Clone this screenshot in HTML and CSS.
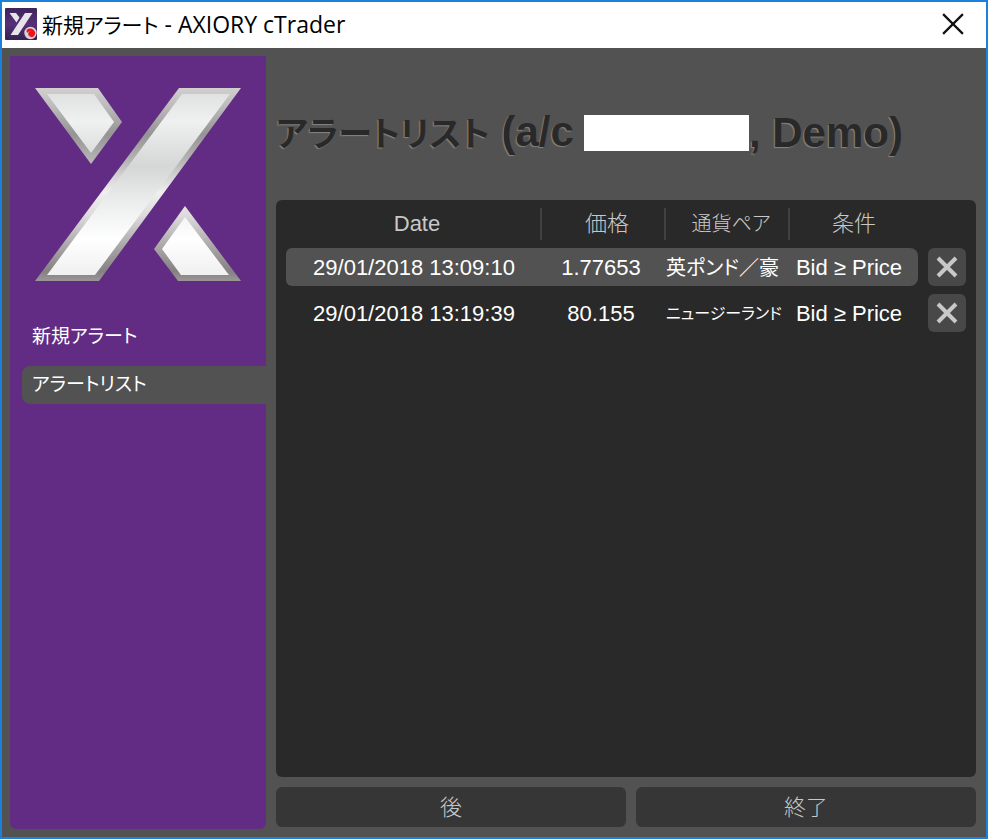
FILE: index.html
```html
<!DOCTYPE html>
<html lang="ja">
<head>
<meta charset="utf-8">
<meta name="viewport" content="width=device-width, initial-scale=1">
<title>新規アラート - AXIORY cTrader</title>
<link rel="stylesheet" href="styles.css">
</head>
<body>
<div class="window">
  <header class="titlebar">
    <svg class="app-icon" viewBox="0 0 32 32" aria-hidden="true">
      <defs>
        <linearGradient id="tile" x1="0" y1="0" x2="0" y2="1">
          <stop offset="0" stop-color="#3d2358"/>
          <stop offset=".5" stop-color="#54307a"/>
          <stop offset="1" stop-color="#38204f"/>
        </linearGradient>
      </defs>
      <rect width="32" height="32" rx="1" fill="url(#tile)"/>
      <path d="M4.500 5h6.500l3.500 4.500-3 5zM20 5h7.500L13 27H5.500z" fill="#e6e4e8"/>
      <circle cx="25.500" cy="25" r="6.200" fill="#d9d4dc"/>
      <path d="M22 21.500c3-2.500 8-.5 8.200 3.500 0 3.500-4 5.500-6.200 3.600 3 .2 4-2.600 2.600-4.200-1.300-1.500-3.600-.8-4.100.6-1-1-1.300-2.500-.5-3.500z" fill="#f01515"/>
      <circle cx="25.700" cy="25.700" r="2.500" fill="#f01515"/>
    </svg>
    <span class="window-title"><span class="jp">新規アラート</span> - AXIORY cTrader</span>
    <button class="window-close" type="button" aria-label="閉じる">
      <svg viewBox="0 0 20 20" aria-hidden="true"><path d="M1 1l18 18M19 1L1 19" fill="none" stroke="#111" stroke-width="2"/></svg>
    </button>
  </header>
  <div class="content">
    <aside class="sidebar">
      <svg class="logo" viewBox="0 0 256 256" aria-hidden="true">
        <defs>
          <linearGradient id="edge" gradientUnits="userSpaceOnUse" x1="0" y1="32" x2="0" y2="225">
            <stop offset="0" stop-color="#d2cfd0"/>
            <stop offset=".1" stop-color="#bcb9ba"/>
            <stop offset=".24" stop-color="#969395"/>
            <stop offset=".38" stop-color="#b8b5b6"/>
            <stop offset=".54" stop-color="#f0efef"/>
            <stop offset=".66" stop-color="#dddbdc"/>
            <stop offset=".82" stop-color="#aaa7a8"/>
            <stop offset=".95" stop-color="#858183"/>
            <stop offset="1" stop-color="#9b9798"/>
          </linearGradient>
          <linearGradient id="face" gradientUnits="userSpaceOnUse" x1="0" y1="38" x2="0" y2="219">
            <stop offset="0" stop-color="#e0e2e1"/>
            <stop offset=".15" stop-color="#eff0f0"/>
            <stop offset=".4" stop-color="#d5d7d6"/>
            <stop offset=".6" stop-color="#eceded"/>
            <stop offset=".8" stop-color="#ffffff"/>
            <stop offset="1" stop-color="#f0f0f0"/>
          </linearGradient>
        </defs>
        <path fill="url(#edge)" d="M25 32H88L112 66 81 108zM169 32H231L89 225H25zM175 150L231 225H168L144 193z"/>
        <path fill="url(#face)" d="M37 38H84L104 66 81 97zM172 38H220L85 219H37zM175 161L219 219H171L152 193z"/>
      </svg>
      <nav class="menu">
        <a class="menu-item" href="#new">新規アラート</a>
        <a class="menu-item active" href="#list" aria-current="page">アラートリスト</a>
      </nav>
    </aside>
    <main class="main">
      <h1 class="heading"><span><span class="jp">アラートリスト</span> (a/c</span><span class="account"></span><span>, Demo)</span></h1>
      <section class="panel">
        <table class="alerts">
          <colgroup>
            <col>
            <col class="col-price">
            <col class="col-pair">
            <col class="col-condition">
            <col class="col-action">
          </colgroup>
          <thead>
            <tr><th scope="col">Date</th><th scope="col">価格</th><th scope="col" class="pair-head">通貨ペア</th><th scope="col">条件</th><td></td></tr>
          </thead>
          <tbody>
            <tr class="selected">
              <td>29/01/2018 13:09:10</td><td class="price">1.77653</td><td class="pair">英ポンド／豪</td><td class="condition">Bid ≥ Price</td>
              <td class="action"><button class="remove" type="button" aria-label="削除"><svg viewBox="0 0 22 22" aria-hidden="true"><path d="M2 2l18 18M20 2L2 20"/></svg></button></td>
            </tr>
            <tr>
              <td>29/01/2018 13:19:39</td><td class="price">80.155</td><td class="pair long">ニュージーランド</td><td class="condition">Bid ≥ Price</td>
              <td class="action"><button class="remove" type="button" aria-label="削除"><svg viewBox="0 0 22 22" aria-hidden="true"><path d="M2 2l18 18M20 2L2 20"/></svg></button></td>
            </tr>
          </tbody>
        </table>
      </section>
      <footer class="actions">
        <button class="btn btn-back" type="button">後</button>
        <button class="btn btn-exit" type="button">終了</button>
      </footer>
    </main>
  </div>
</div>
</body>
</html>
```
FILE: styles.css
```css
* { box-sizing: border-box; }

body {
  margin: 0;
  font-family: "Liberation Sans", "Noto Sans CJK JP", sans-serif;
  font-size: 22px;
  font-weight: 400;
  font-feature-settings: "palt";
  color: #fff;
}

button {
  font: inherit;
  font-feature-settings: inherit;
  border: 0;
  padding: 0;
}

.window {
  display: flex;
  flex-direction: column;
  min-height: 100vh;
  border: 2px solid #1a80d9;
  background: #525252;
}

.titlebar {
  display: flex;
  align-items: center;
  gap: 5px;
  height: 46px;
  padding: 0 22px 2px 3px;
  background: #fff;
  color: #000;
}

.app-icon { width: 32px; height: 32px; }

.window-title {
  flex: 1;
  font-family: "Open Sans", "Noto Sans CJK JP", sans-serif;
  font-size: 23px;
  white-space: nowrap;
}

.window-title .jp { font-size: 21px; }

.window-close {
  display: flex;
  background: none;
}

.window-close svg { width: 22px; height: 22px; }

.content {
  display: flex;
  flex: 1;
  gap: 10px;
  padding: 8px 10px 8px 8px;
}

.sidebar {
  flex: 0 0 256px;
  display: flex;
  flex-direction: column;
  gap: 6px;
  border-radius: 0 0 6px 6px;
  background: #622c84;
}

.logo { display: block; width: 100%; }

.menu {
  display: flex;
  flex-direction: column;
  gap: 10px;
  padding-left: 12px;
}

.menu-item {
  padding-left: 10px;
  border-radius: 8px 0 0 8px;
  color: #fff;
  font-size: 19px;
  line-height: 38px;
  text-decoration: none;
}

.menu-item.active { background: #525252; }

.main {
  flex: 1;
  min-width: 0;
  display: flex;
  flex-direction: column;
  gap: 10px;
  padding-bottom: 2px;
}

.heading {
  display: flex;
  align-items: center;
  height: 134px;
  margin: 0;
  padding-top: 20px;
  color: #292929;
  font-size: 42px;
  line-height: 48px;
  text-shadow: -1px 1px 1px #858585;
  white-space: nowrap;
}

.heading .jp { font-size: 34px; }

.account {
  width: 165px;
  height: 36px;
  margin-left: 10px;
  background: #fff;
}

.panel {
  flex: 1;
  padding: 0 10px;
  border-radius: 6px;
  background: #292929;
}

.alerts {
  width: 100%;
  table-layout: fixed;
  border-spacing: 0 8px;
  line-height: 32px;
  text-align: center;
}

.col-price, .col-pair { width: 124px; }
.col-condition { width: 128px; }
.col-action { width: 48px; }

.alerts th, .alerts td { padding: 0; white-space: nowrap; }

.alerts th {
  height: 32px;
  color: #c8c8c8;
  font-weight: 300;
}

.alerts th:not(:nth-child(4)) {
  padding-left: 8px;
  border-right: 2px solid #414141;
}

.alerts .pair-head { font-size: 20px; }

.alerts tbody td { height: 38px; }

.alerts tbody td:not(.action) { padding-top: 2px; }

.alerts .price { padding-right: 6px; }

.alerts .pair {
  font-size: 20px;
  text-align: left;
}

.alerts .pair.long { font-size: 16px; }

.alerts .condition { padding-right: 10px; }

.selected td:not(.action) { background: #525252; }
.selected td:first-child { border-radius: 6px 0 0 6px; }
.selected td:nth-child(4) { border-radius: 0 8px 8px 0; }

.remove {
  display: flex;
  align-items: center;
  justify-content: center;
  width: 38px;
  height: 38px;
  margin-left: auto;
  border-radius: 6px;
  background: #484848;
}

.remove svg {
  width: 22px;
  height: 22px;
  fill: none;
  stroke: #c8c8c8;
  stroke-width: 4;
}

.actions { display: flex; gap: 10px; }

.btn {
  height: 40px;
  padding-bottom: 4px;
  border-radius: 6px;
  background: #363636;
  color: #c8c8c8;
  font-weight: 300;
}

.btn-back { flex: 35 1 0; }
.btn-exit { flex: 34 1 0; }
```
